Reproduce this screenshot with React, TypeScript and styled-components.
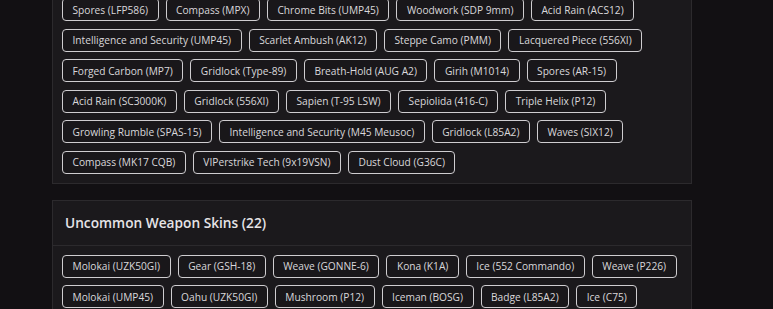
import React from "react";
import styled, { createGlobalStyle } from "styled-components";

const PageBg = "#121013";
const CardBg = "#1b191c";
const CardLine = "#2c2a2d";

const GlobalStyle = createGlobalStyle`
  html, body {
    margin: 0;
    padding: 0;
    background: ${PageBg};
    font-family: "Open Sans", "Noto Sans", sans-serif;
    overflow: hidden;
  }
`;

const Page = styled.div`
  display: flex;
  flex-direction: column;
  gap: 16px;
  width: 640px;
  margin: -57px 0 0 52px;
`;

const Card = styled.section`
  background: ${CardBg};
  border: 1px solid ${CardLine};
`;

const CardHeader = styled.h2`
  margin: 0;
  height: 44px;
  display: flex;
  align-items: center;
  padding: 0 12px;
  border-bottom: 1px solid ${CardLine};
  color: #e6e4e7;
  font-size: 13.7px;
  font-weight: 600;
`;

const ChipList = styled.div`
  display: flex;
  flex-wrap: wrap;
  gap: 7.5px 7px;
  padding: 9px;
`;

const Chip = styled.span`
  display: inline-flex;
  align-items: center;
  height: 23px;
  box-sizing: border-box;
  padding: 0 9.5px;
  border: 1px solid #cfcdd0;
  border-radius: 4px;
  background: #19171a;
  color: #d9d7da;
  font-size: 10.2px;
  white-space: nowrap;
`;

const rare = [
  "Spores (LFP586)",
  "Compass (MPX)",
  "Chrome Bits (UMP45)",
  "Woodwork (SDP 9mm)",
  "Acid Rain (ACS12)",
  "Intelligence and Security (UMP45)",
  "Scarlet Ambush (AK12)",
  "Steppe Camo (PMM)",
  "Lacquered Piece (556XI)",
  "Forged Carbon (MP7)",
  "Gridlock (Type-89)",
  "Breath-Hold (AUG A2)",
  "Girih (M1014)",
  "Spores (AR-15)",
  "Acid Rain (SC3000K)",
  "Gridlock (556XI)",
  "Sapien (T-95 LSW)",
  "Sepiolida (416-C)",
  "Triple Helix (P12)",
  "Growling Rumble (SPAS-15)",
  "Intelligence and Security (M45 Meusoc)",
  "Gridlock (L85A2)",
  "Waves (SIX12)",
  "Compass (MK17 CQB)",
  "VIPerstrike Tech (9x19VSN)",
  "Dust Cloud (G36C)",
];

const uncommon = [
  "Molokai (UZK50GI)",
  "Gear (GSH-18)",
  "Weave (GONNE-6)",
  "Kona (K1A)",
  "Ice (552 Commando)",
  "Weave (P226)",
  "Molokai (UMP45)",
  "Oahu (UZK50GI)",
  "Mushroom (P12)",
  "Iceman (BOSG)",
  "Badge (L85A2)",
  "Ice (C75)",
  "Aqua (M590A1)",
  "Oahu (Mk1 9mm)",
];

const SkinCard: React.FC<{ title: string; skins: string[] }> = ({ title, skins }) => (
  <Card>
    <CardHeader>{title}</CardHeader>
    <ChipList>
      {skins.map((s, i) => (
        <Chip key={i}>{s}</Chip>
      ))}
    </ChipList>
  </Card>
);

export default function App() {
  return (
    <>
      <GlobalStyle />
      <Page>
        <SkinCard title="Rare Weapon Skins (26)" skins={rare} />
        <SkinCard title="Uncommon Weapon Skins (22)" skins={uncommon} />
      </Page>
    </>
  );
}
